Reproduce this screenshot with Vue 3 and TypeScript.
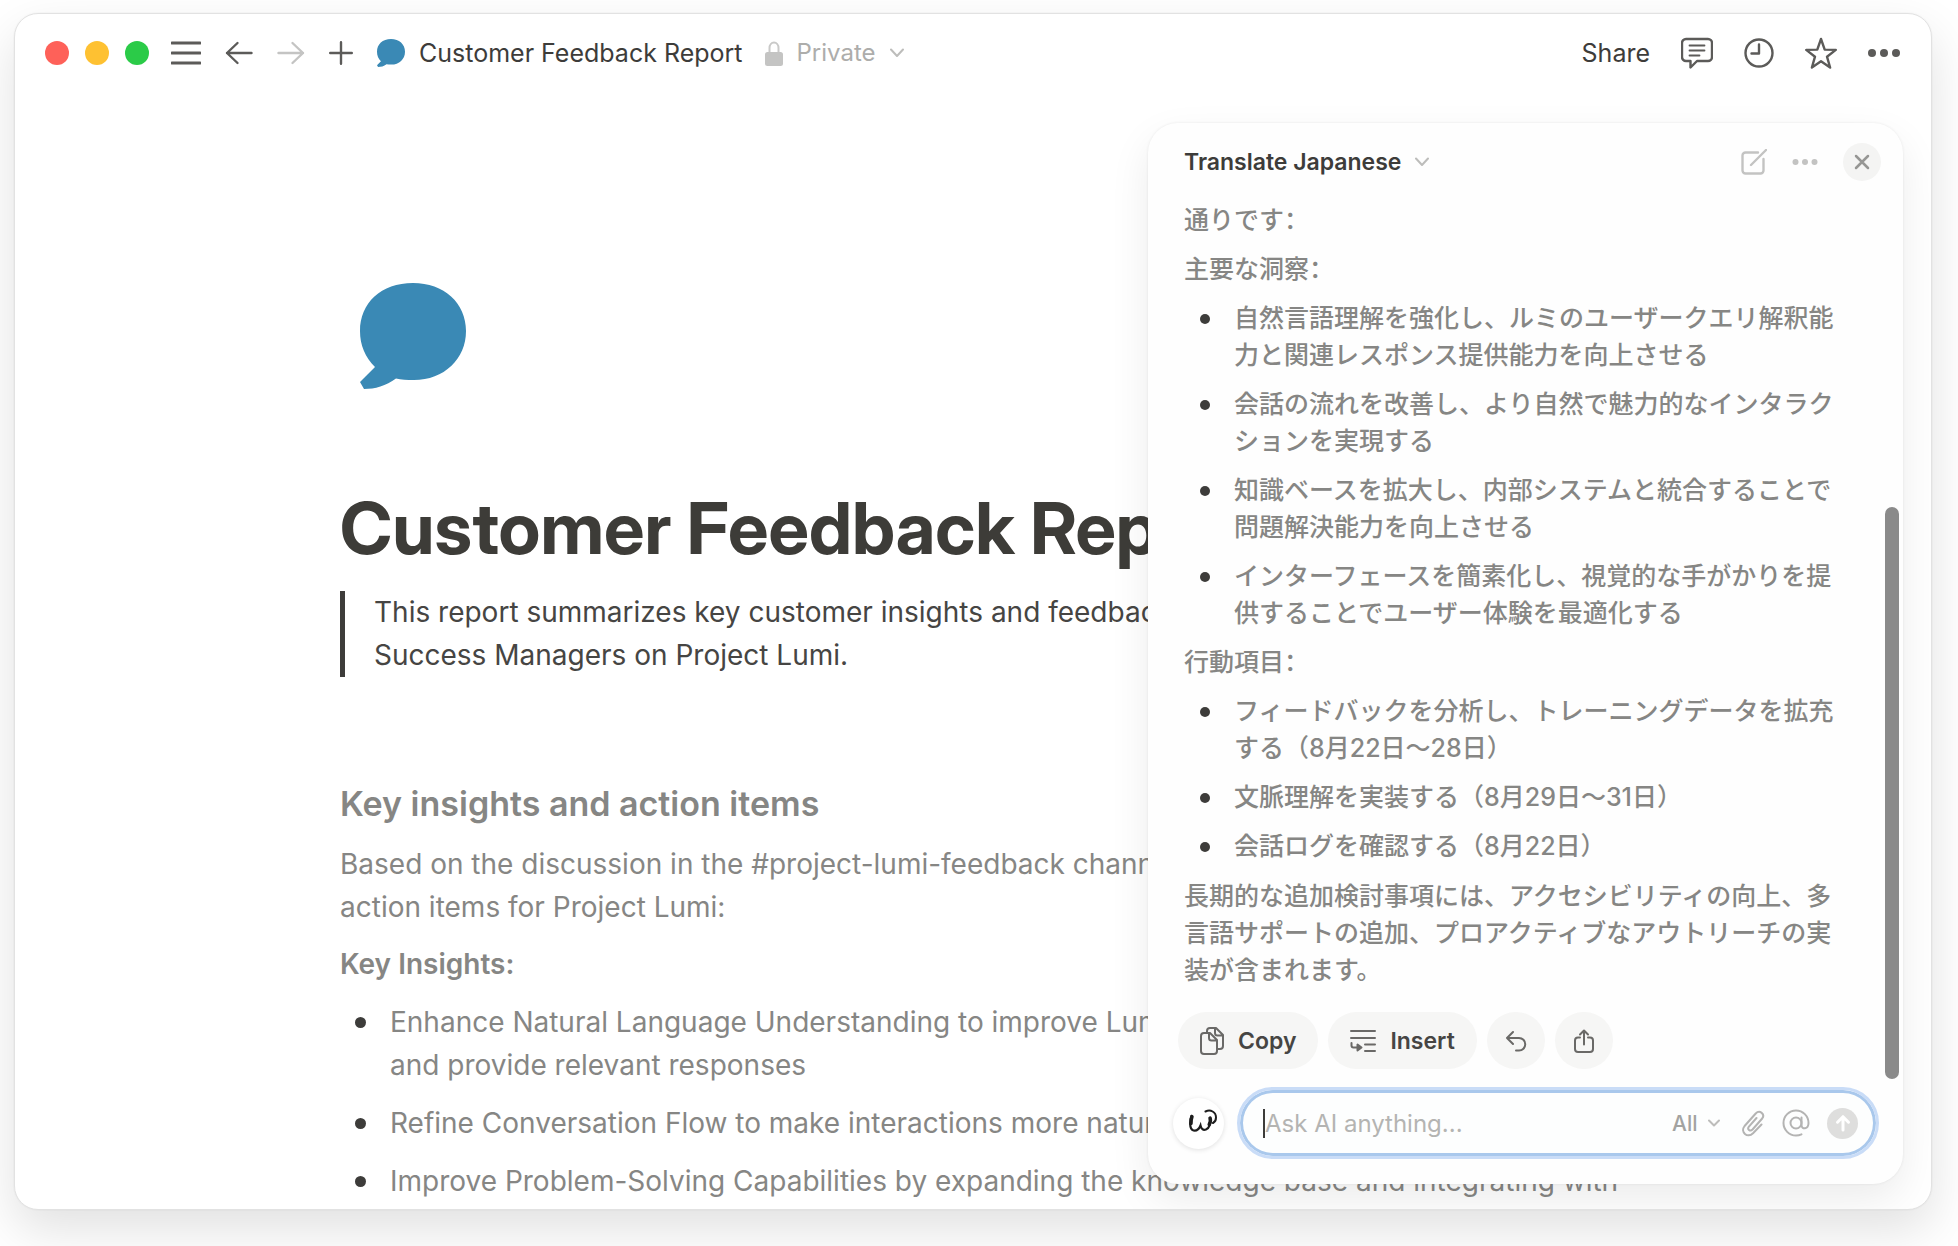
<script setup lang="ts">
import { ref } from 'vue'

interface ReplyBlock {
  kind: 'text' | 'label' | 'list'
  text?: string
  items?: string[]
}

const prompt = ref('')
const scope = ref('All')

const insights: string[][] = [
  [
    'Enhance Natural Language Understanding to improve Lumi',
    'and provide relevant responses',
  ],
  ['Refine Conversation Flow to make interactions more natural'],
  ['Improve Problem-Solving Capabilities by expanding the knowledge base and integrating with'],
]

const reply: ReplyBlock[] = [
  { kind: 'label', text: '通りです' },
  { kind: 'label', text: '主要な洞察' },
  {
    kind: 'list',
    items: [
      '自然言語理解を強化し、ルミのユーザークエリ解釈能力と関連レスポンス提供能力を向上させる',
      '会話の流れを改善し、より自然で魅力的なインタラクションを実現する',
      '知識ベースを拡大し、内部システムと統合することで問題解決能力を向上させる',
      'インターフェースを簡素化し、視覚的な手がかりを提供することでユーザー体験を最適化する',
    ],
  },
  { kind: 'label', text: '行動項目' },
  {
    kind: 'list',
    items: [
      'フィードバックを分析し、トレーニングデータを拡充する（8月22日～28日）',
      '文脈理解を実装する（8月29日～31日）',
      '会話ログを確認する（8月22日）',
    ],
  },
  {
    kind: 'text',
    text: '長期的な追加検討事項には、アクセシビリティの向上、多言語サポートの追加、プロアクティブなアウトリーチの実装が含まれます。',
  },
]
</script>

<template>
  <div class="desktop">
    <div class="window">
      <header class="topbar">
        <div class="lights">
          <button class="light red" aria-label="Close window"></button>
          <button class="light amber" aria-label="Minimize window"></button>
          <button class="light green" aria-label="Zoom window"></button>
        </div>
        <nav class="nav">
          <button class="icon" aria-label="Menu">
            <svg width="30" height="26" viewBox="0 0 30 26"><path class="bar" d="M1 3h28M1 13h28M1 23h28" /></svg>
          </button>
          <button class="icon" aria-label="Back">
            <svg width="28" height="28" viewBox="0 0 28 28"><path d="M26.500 14H2M12.500 4 2 14l10.500 10" /></svg>
          </button>
          <button class="icon faint" aria-label="Forward">
            <svg width="28" height="28" viewBox="0 0 28 28"><path d="M1.500 14H26M15.500 4 26 14 15.500 24" /></svg>
          </button>
          <button class="icon" aria-label="New page">
            <svg width="24" height="24" viewBox="0 0 24 24"><path d="M12 1.200v21.600M1.200 12h21.600" /></svg>
          </button>
        </nav>
        <div class="crumb">
          <svg class="bubble" width="28" height="28" viewBox="0 0 106 106">
            <path d="M53 0c31 0 53 20 53 48S84 97 54 97c-7 0-13 0-18-1.500C26 103 15 106 4 106L0 99l15-15C5 74 0 62 0 48 0 20 21 0 53 0Z" />
          </svg>
          <span>Customer Feedback Report</span>
        </div>
        <button class="privacy" aria-haspopup="menu">
          <svg width="18" height="25" viewBox="0 0 18 25">
            <path d="M4.500 12V7a4.500 5.500 0 0 1 9 0v5" fill="none" stroke="#c9c9c8" stroke-width="2" />
            <rect x="0" y="11" width="18" height="14" rx="2.500" fill="#c4c4c3" />
          </svg>
          <span>Private</span>
          <svg class="chev" width="14" height="10" viewBox="0 0 14 10"><path d="M1 1.500 7 8l6-6.500" /></svg>
        </button>
        <div class="actions">
          <button>Share</button>
          <button class="icon" aria-label="Comments">
            <svg width="32" height="32" viewBox="0 0 32 32">
              <path d="M5 2h22a4 4 0 0 1 4 4v14a4 4 0 0 1-4 4H16l-6.500 6.500V24H5a4 4 0 0 1-4-4V6a4 4 0 0 1 4-4Z" />
              <path class="thin" d="M8.500 8.500h15M8.500 13.500h15M8.500 18.500h10" />
            </svg>
          </button>
          <button class="icon" aria-label="Updates">
            <svg width="30" height="30" viewBox="0 0 30 30"><circle cx="15" cy="15" r="13.500" /><path d="M15 6.500V15.500H7.500" /></svg>
          </button>
          <button class="icon" aria-label="Favorite">
            <svg width="32" height="32" viewBox="0 0 32 32">
              <path d="m16 2 3.700 10.600 11.100.3-8.800 6.800 3.100 10.800L16 24.200l-9.100 6.300L10 19.700 1.200 12.900l11.100-.3Z" />
            </svg>
          </button>
          <button class="icon" aria-label="More">
            <svg width="32" height="8" viewBox="0 0 32 8"><g class="solid"><circle cx="4" cy="4" r="4" /><circle cx="16" cy="4" r="4" /><circle cx="28" cy="4" r="4" /></g></svg>
          </button>
        </div>
      </header>

      <main class="doc">
        <svg class="bubble cover" width="106" height="106" viewBox="0 0 106 106">
          <path d="M53 0c31 0 53 20 53 48S84 97 54 97c-7 0-13 0-18-1.500C26 103 15 106 4 106L0 99l15-15C5 74 0 62 0 48 0 20 21 0 53 0Z" />
        </svg>
        <h1>Customer Feedback Report</h1>
        <blockquote>
          This report summarizes key customer insights and feedback<br />
          Success Managers on Project Lumi.
        </blockquote>
        <h2>Key insights and action items</h2>
        <p>
          Based on the discussion in the #project-lumi-feedback channel<br />
          action items for Project Lumi:
        </p>
        <h3>Key Insights:</h3>
        <ul class="insights">
          <li v-for="(lines, i) in insights" :key="i">
            <span v-for="line in lines" :key="line" class="line">{{ line }}</span>
          </li>
        </ul>
      </main>

      <aside class="panel">
        <header class="panel-head">
          <button class="thread" aria-haspopup="menu">
            <span>Translate Japanese</span>
            <svg class="chev" width="14" height="10" viewBox="0 0 14 10"><path d="M1 1.500 7 8l6-6.500" /></svg>
          </button>
          <div class="panel-tools">
            <button class="icon pale" aria-label="New chat">
              <svg width="26" height="26" viewBox="0 0 26 26"><path d="M17 3.500H4.500a3 3 0 0 0-3 3v15a3 3 0 0 0 3 3h15a3 3 0 0 0 3-3V10M10 16 25 1" /></svg>
            </button>
            <button class="icon pale" aria-label="More options">
              <svg width="26" height="8" viewBox="0 0 26 8"><g class="solid"><circle cx="3.500" cy="4" r="3" /><circle cx="13" cy="4" r="3" /><circle cx="22.500" cy="4" r="3" /></g></svg>
            </button>
            <button class="close" aria-label="Close">
              <svg width="16" height="16" viewBox="0 0 16 16"><path d="m2 2 12 12M14 2 2 14" /></svg>
            </button>
          </div>
        </header>

        <div class="reply" lang="ja">
          <template v-for="(block, i) in reply" :key="i">
            <ul v-if="block.kind === 'list'">
              <li v-for="item in block.items" :key="item">{{ item }}</li>
            </ul>
            <p v-else-if="block.kind === 'label'">{{ block.text }}<span class="colon" lang="zh-CN">：</span></p>
            <p v-else class="closing">{{ block.text }}</p>
          </template>
        </div>

        <div class="chips">
          <button class="chip">
            <svg width="24" height="28" viewBox="0 0 24 28">
              <path d="M7 6V4a3 3 0 0 1 3-3h6l7 7v11a3 3 0 0 1-3 3h-2M15 1.500V6a2.500 2.500 0 0 0 2.500 2.500H22" />
              <path d="M4 6h6l7 7v11a3 3 0 0 1-3 3H4a3 3 0 0 1-3-3V9a3 3 0 0 1 3-3ZM9 6.500V11a2.500 2.500 0 0 0 2.500 2.500H17" />
            </svg>
            Copy
          </button>
          <button class="chip">
            <svg width="26" height="24" viewBox="0 0 26 24">
              <path d="M1 2h24M1 9h24M15 15.500h10M15 22h10M1.500 14v2.500a2 2 0 0 0 2 2H10" />
              <path class="tip" d="M7.500 15.500v6l4-3Z" />
            </svg>
            Insert
          </button>
          <button class="chip round" aria-label="Undo">
            <svg width="22" height="22" viewBox="0 0 22 22"><path d="M8 2 2 8l6 6M2 8h12a6 6 0 0 1 0 12.500h-3" /></svg>
          </button>
          <button class="chip round" aria-label="Export">
            <svg width="20" height="24" viewBox="0 0 20 24"><path d="M6 8.500H4a3 3 0 0 0-3 3V20a3 3 0 0 0 3 3h12a3 3 0 0 0 3-3v-8.500a3 3 0 0 0-3-3h-2M10 15.500V1.500M6 5.500l4-4 4 4" /></svg>
          </button>
        </div>

        <form class="composer" @submit.prevent>
          <span class="face">
            <svg width="28" height="24" viewBox="0 0 28 24">
              <path d="M2.500 7C.8 11 0 20.500 4.500 21.500c4 .8 6-2.500 7-5 .8 3.500 2.500 5 5.500 4 3.500-1.200 5-6.500 4.500-11" />
              <path class="brow" d="M16.500 2.500c5-2.500 10.500.5 10.500 6 0 3-1 4.500-3 5.500" />
              <path class="eye" d="M3 7.500C2.200 9.500 2 12 2 14.500M21 9c.8 2 .3 4.500-.8 6.500" />
            </svg>
          </span>
          <div class="field">
            <span class="caret"></span>
            <input v-model="prompt" type="text" placeholder="Ask AI anything..." aria-label="Ask AI anything" />
            <label class="scope">
              <select v-model="scope" aria-label="Search scope">
                <option>All</option>
              </select>
              <svg class="chev" width="12" height="8" viewBox="0 0 12 8"><path d="m1 1.500 5 5 5-5" /></svg>
            </label>
            <button class="icon soft" type="button" aria-label="Attach file">
              <svg width="24" height="28" viewBox="0 0 24 28">
                <path d="M20.500 15.500 12 24.200c-5.500 5.300-13.200-1-8.400-7.200L14.700 4.500c4-4 9.700.6 6.500 5L11.500 20.500c-2.600 2.500-5.600-.4-3.600-2.900l7.600-8.600" />
              </svg>
            </button>
            <button class="icon soft" type="button" aria-label="Mention">
              <svg width="28" height="28" viewBox="0 0 28 28">
                <circle cx="14" cy="14" r="5.500" />
                <path d="M19.500 8.500V16c0 5 7 4.500 7-2A12.500 12.500 0 1 0 14 26.500c2.500 0 4-.5 5.500-1.200" />
              </svg>
            </button>
            <button class="send" type="submit" aria-label="Send">
              <svg width="18" height="18" viewBox="0 0 18 18"><path d="M9 16V3M3.500 8.200 9 2.700l5.500 5.500" /></svg>
            </button>
          </div>
        </form>
        <div class="scrollbar"></div>
      </aside>
    </div>
  </div>
</template>

<style>
body {
  margin: 0;
  background: #fff;
}
</style>

<style scoped>
.desktop {
  box-sizing: border-box;
  min-height: 100vh;
  display: flex;
  padding: 13px 26px 36px 14px;
  overflow: hidden;
  background: #fff;
  font-family: Inter, "Noto Sans CJK JP", sans-serif;
  color: #3d3c3a;
}
button {
  border: 0;
  padding: 0;
  background: none;
  font: inherit;
  color: inherit;
  display: flex;
  align-items: center;
}
svg {
  flex: none;
  display: block;
}
p, h1, h2, h3, ul, blockquote {
  margin: 0;
  padding: 0;
}
.window {
  position: relative;
  flex: 1;
  box-sizing: border-box;
  display: flex;
  flex-direction: column;
  overflow: hidden;
  border: 1px solid #e2e2e2;
  border-radius: 24px;
  background: #fff;
  box-shadow: 0 0 0 1px rgba(0, 0, 0, 0.02), 0 20px 50px rgba(0, 0, 0, 0.12);
}
.topbar {
  display: flex;
  align-items: center;
  height: 78px;
  padding: 0 31px 0 30px;
  font-size: 25px;
  line-height: 36px;
  white-space: nowrap;
}
.lights {
  display: flex;
  gap: 16px;
}
.light {
  width: 24px;
  height: 24px;
  border-radius: 50%;
}
.red { background: #fe6159; }
.amber { background: #fec132; }
.green { background: #2bcb48; }
.nav {
  display: flex;
  align-items: center;
  gap: 24px;
  margin-left: 22px;
}
.icon svg {
  fill: none;
  stroke: #5c5b59;
  stroke-width: 2.4;
  stroke-linecap: round;
  stroke-linejoin: round;
}
.icon .bar { stroke-width: 3; }
.icon .thin { stroke-width: 1.800; }
.icon .solid { fill: #5c5b59; stroke: none; }
.icon.faint svg { stroke: #c4c4c3; }
.icon.pale svg { stroke: #c3c3c2; }
.icon.pale .solid { fill: #c3c3c2; stroke: none; }
.icon.soft svg { stroke: #b4b4b3; stroke-width: 2; }
.bubble { fill: #3a89b5; }
.crumb {
  display: flex;
  align-items: center;
  gap: 14px;
  margin-left: 24px;
}
.privacy {
  gap: 14px;
  margin-left: 22px;
  font-size: 24px;
  color: #adadab;
}
.chev {
  fill: none;
  stroke: #bdbdbb;
  stroke-width: 2;
  stroke-linecap: round;
  stroke-linejoin: round;
}
.actions {
  display: flex;
  align-items: center;
  gap: 31px;
  margin-left: auto;
}
.doc {
  padding: 191px 40px 0 325px;
  font-size: 28px;
  line-height: 43px;
  color: #868684;
  white-space: nowrap;
}
.cover { margin-left: 20px; }
h1 {
  margin-top: 96px;
  font-family: "Inter Display", Inter, sans-serif;
  font-size: 72px;
  line-height: 86px;
  font-weight: 700;
  color: #3d3c38;
}
blockquote {
  margin-top: 20px;
  padding-left: 29px;
  border-left: 5px solid #3d3c3a;
  color: #464543;
}
h2 {
  margin-top: 104px;
  font-size: 34px;
  line-height: 46px;
  font-weight: 600;
}
h2 + p { margin-top: 16px; }
h3 {
  margin-top: 14px;
  font-size: 28px;
  line-height: 43px;
  font-weight: 600;
}
ul { list-style: none; }
.insights {
  display: flex;
  flex-direction: column;
  gap: 15px;
  margin-top: 15px;
}
.line { display: block; }
li {
  position: relative;
  padding-left: 50px;
}
li::before {
  content: "";
  position: absolute;
  left: 15px;
  top: 16px;
  width: 11px;
  height: 11px;
  border-radius: 50%;
  background: #3d3c3a;
}
.panel {
  position: absolute;
  top: 109px;
  right: 28px;
  bottom: 25px;
  width: 755px;
  box-sizing: border-box;
  display: flex;
  flex-direction: column;
  padding: 17px 24px 25px 25px;
  border-radius: 30px;
  background: #fefefe;
  box-shadow: 0 0 3px rgba(0, 0, 0, 0.08), 0 16px 40px rgba(0, 0, 0, 0.08);
}
.panel-head {
  display: flex;
  align-items: center;
  justify-content: space-between;
  height: 44px;
  margin-right: -2px;
  padding-left: 11px;
}
.thread {
  gap: 14px;
  font-size: 23px;
  font-weight: 600;
}
.panel-tools {
  display: flex;
  align-items: center;
  gap: 25px;
}
.close {
  width: 38px;
  height: 38px;
  justify-content: center;
  border-radius: 50%;
  background: #f4f4f3;
}
.close svg { fill: none; stroke: #969694; stroke-width: 2.500; stroke-linecap: round; }
.reply {
  display: flex;
  flex-direction: column;
  gap: 12px;
  margin-top: 18px;
  padding: 0 30px 0 11px;
  font-size: 25px;
  line-height: 37px;
  font-weight: 500;
  color: #868684;
}
.reply ul {
  display: flex;
  flex-direction: column;
  gap: 12px;
}
.reply li::before {
  left: 16px;
  top: 14px;
  width: 10px;
  height: 10px;
}
.colon {
  font-family: "Noto Sans CJK SC", sans-serif;
  line-height: 1;
}
.closing { margin-top: 1px; }
.chips {
  display: flex;
  gap: 10px;
  margin-top: auto;
  padding-left: 5px;
}
.chip {
  gap: 14px;
  height: 57px;
  padding: 0 22px;
  border-radius: 29px;
  background: #f6f6f5;
  font-size: 23px;
  font-weight: 600;
  color: #464543;
}
.chip svg {
  fill: none;
  stroke: #6a6967;
  stroke-width: 2;
  stroke-linecap: round;
  stroke-linejoin: round;
}
.chip .tip { fill: #6a6967; }
.chip.round {
  width: 58px;
  padding: 0;
  justify-content: center;
}
.composer {
  display: flex;
  align-items: center;
  gap: 13px;
  margin-top: 18px;
}
.face {
  width: 51px;
  height: 51px;
  box-sizing: border-box;
  flex: none;
  display: flex;
  align-items: center;
  justify-content: flex-end;
  padding: 0 7px 4px 0;
  border-radius: 50%;
  background: #fff;
  box-shadow: 0 1px 5px rgba(0, 0, 0, 0.12);
}
.face svg { fill: none; stroke: #1d1d1d; stroke-width: 2.200; stroke-linecap: round; }
.face .brow { stroke-width: 2; }
.face .eye { stroke-width: 3.500; }
.field {
  flex: 1;
  min-width: 0;
  box-sizing: border-box;
  height: 72px;
  display: flex;
  align-items: center;
  padding: 0 18px 0 23px;
  border: 3px solid #c9dcf7;
  border-radius: 36px;
  background: #fdfefe;
  box-shadow: inset 0 0 0 3px #a9c8ec;
}
.caret {
  width: 2px;
  height: 29px;
  background: #3d3c3a;
}
.field input {
  flex: 1;
  min-width: 0;
  border: 0;
  outline: 0;
  padding: 0;
  background: none;
  font: inherit;
  font-size: 24px;
  color: #3d3c3a;
}
.field input::placeholder { color: #b4b4b2; opacity: 1; }
.scope {
  display: flex;
  align-items: center;
  gap: 10px;
  margin-right: 21px;
}
.scope select {
  appearance: none;
  border: 0;
  padding: 0;
  background: none;
  font: inherit;
  font-size: 21px;
  font-weight: 500;
  color: #a3a3a1;
}
.field .icon { margin-right: 17px; }
.send {
  width: 31px;
  height: 31px;
  justify-content: center;
  border-radius: 50%;
  background: #dededd;
}
.send svg { fill: none; stroke: #fff; stroke-width: 3; stroke-linecap: round; stroke-linejoin: round; }
.scrollbar {
  position: absolute;
  right: 4px;
  top: 384px;
  bottom: 105px;
  width: 14px;
  border-radius: 7px;
  background: #8a8a8a;
}
</style>
